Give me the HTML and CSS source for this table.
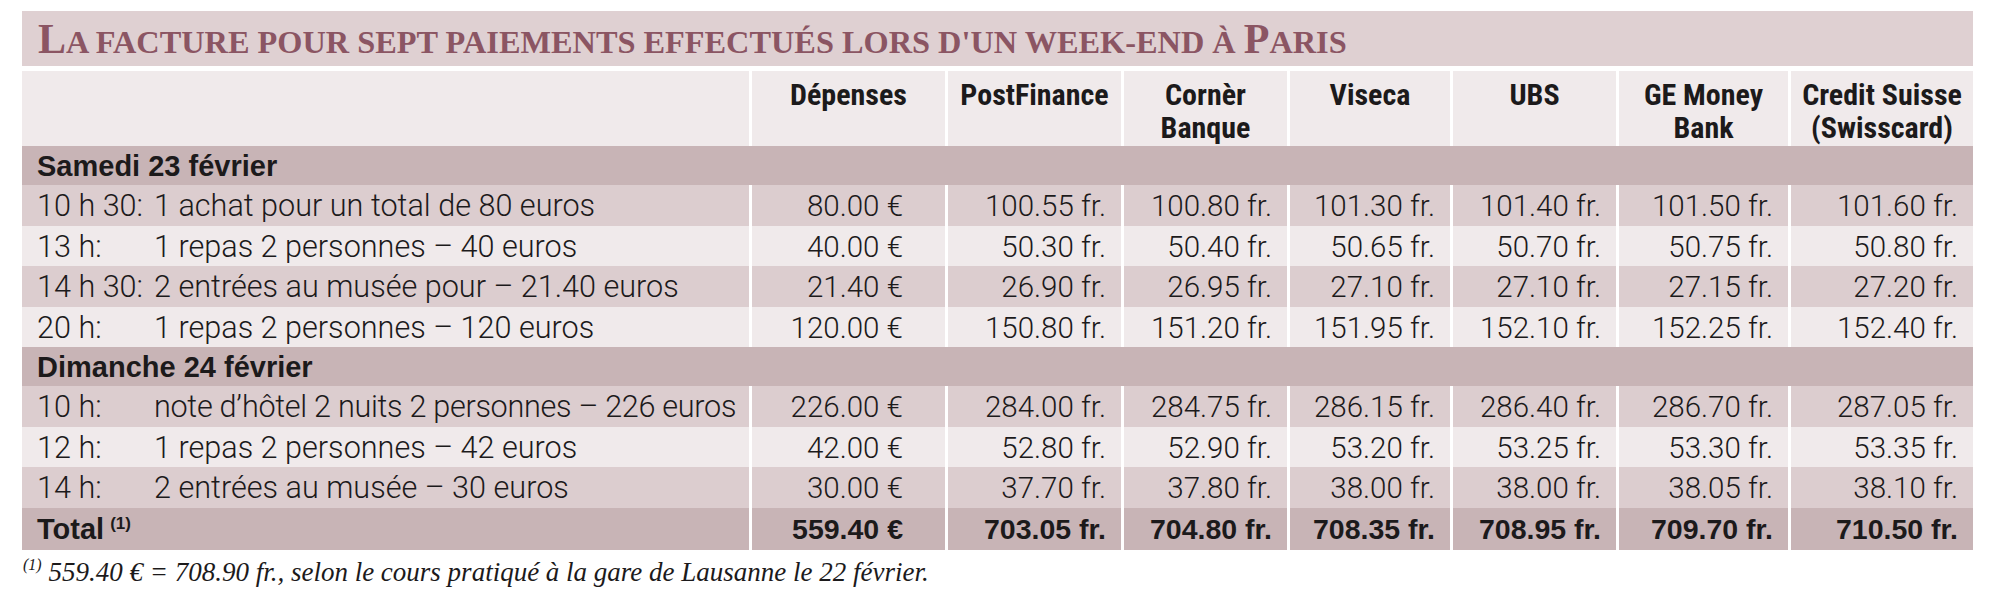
FILE: index.html
```html
<!DOCTYPE html>
<html lang="fr">
<head>
<meta charset="utf-8">
<title>La facture pour sept paiements</title>
<link rel="stylesheet" href="styles.css">
</head>
<body>
<div class="sheet">
  <h1 class="title">L<span class="sc">a facture pour sept paiements effectués lors d'un week-end à </span>P<span class="sc">aris</span></h1>
  <div class="table">
    <div class="row head">
      <div class="cell"></div>
      <div class="cell">Dépenses</div>
      <div class="cell">PostFinance</div>
      <div class="cell">Cornèr<br>Banque</div>
      <div class="cell">Viseca</div>
      <div class="cell">UBS</div>
      <div class="cell">GE Money<br>Bank</div>
      <div class="cell">Credit Suisse<br>(Swisscard)</div>
    </div>
    <div class="band">Samedi 23 février</div>
    <div class="row data dark">
      <div class="cell label"><span class="time">10 h 30:</span><span class="desc">1 achat pour un total de 80 euros</span></div>
      <div class="cell num eur">80.00 €</div>
      <div class="cell num">100.55 fr.</div>
      <div class="cell num">100.80 fr.</div>
      <div class="cell num">101.30 fr.</div>
      <div class="cell num">101.40 fr.</div>
      <div class="cell num">101.50 fr.</div>
      <div class="cell num">101.60 fr.</div>
    </div>
    <div class="row data light">
      <div class="cell label"><span class="time">13 h:</span><span class="desc">1 repas 2 personnes – 40 euros</span></div>
      <div class="cell num eur">40.00 €</div>
      <div class="cell num">50.30 fr.</div>
      <div class="cell num">50.40 fr.</div>
      <div class="cell num">50.65 fr.</div>
      <div class="cell num">50.70 fr.</div>
      <div class="cell num">50.75 fr.</div>
      <div class="cell num">50.80 fr.</div>
    </div>
    <div class="row data dark">
      <div class="cell label"><span class="time">14 h 30:</span><span class="desc">2 entrées au musée pour – 21.40 euros</span></div>
      <div class="cell num eur">21.40 €</div>
      <div class="cell num">26.90 fr.</div>
      <div class="cell num">26.95 fr.</div>
      <div class="cell num">27.10 fr.</div>
      <div class="cell num">27.10 fr.</div>
      <div class="cell num">27.15 fr.</div>
      <div class="cell num">27.20 fr.</div>
    </div>
    <div class="row data light">
      <div class="cell label"><span class="time">20 h:</span><span class="desc">1 repas 2 personnes – 120 euros</span></div>
      <div class="cell num eur">120.00 €</div>
      <div class="cell num">150.80 fr.</div>
      <div class="cell num">151.20 fr.</div>
      <div class="cell num">151.95 fr.</div>
      <div class="cell num">152.10 fr.</div>
      <div class="cell num">152.25 fr.</div>
      <div class="cell num">152.40 fr.</div>
    </div>
    <div class="band">Dimanche 24 février</div>
    <div class="row data dark">
      <div class="cell label"><span class="time">10 h:</span><span class="desc hotel">note d’hôtel 2 nuits 2 personnes – 226 euros</span></div>
      <div class="cell num eur">226.00 €</div>
      <div class="cell num">284.00 fr.</div>
      <div class="cell num">284.75 fr.</div>
      <div class="cell num">286.15 fr.</div>
      <div class="cell num">286.40 fr.</div>
      <div class="cell num">286.70 fr.</div>
      <div class="cell num">287.05 fr.</div>
    </div>
    <div class="row data light">
      <div class="cell label"><span class="time">12 h:</span><span class="desc">1 repas 2 personnes – 42 euros</span></div>
      <div class="cell num eur">42.00 €</div>
      <div class="cell num">52.80 fr.</div>
      <div class="cell num">52.90 fr.</div>
      <div class="cell num">53.20 fr.</div>
      <div class="cell num">53.25 fr.</div>
      <div class="cell num">53.30 fr.</div>
      <div class="cell num">53.35 fr.</div>
    </div>
    <div class="row data dark">
      <div class="cell label"><span class="time">14 h:</span><span class="desc">2 entrées au musée – 30 euros</span></div>
      <div class="cell num eur">30.00 €</div>
      <div class="cell num">37.70 fr.</div>
      <div class="cell num">37.80 fr.</div>
      <div class="cell num">38.00 fr.</div>
      <div class="cell num">38.00 fr.</div>
      <div class="cell num">38.05 fr.</div>
      <div class="cell num">38.10 fr.</div>
    </div>
    <div class="row data total">
      <div class="cell label">Total<sup class="ref">(1)</sup></div>
      <div class="cell num eur">559.40 €</div>
      <div class="cell num">703.05 fr.</div>
      <div class="cell num">704.80 fr.</div>
      <div class="cell num">708.35 fr.</div>
      <div class="cell num">708.95 fr.</div>
      <div class="cell num">709.70 fr.</div>
      <div class="cell num">710.50 fr.</div>
    </div>
  </div>
  <p class="note"><sup>(1)</sup> 559.40 € = 708.90 fr., selon le cours pratiqué à la gare de Lausanne le 22 février.</p>
</div>
</body>
</html>
```

FILE: styles.css
```css
html, body {
  margin: 0;
  padding: 0;
  background: #ffffff;
}

.sheet {
  margin: 11px 27px 0 22px;
  color: #1c1a1b;
}

.title {
  margin: 0;
  height: 55px;
  padding-left: 16px;
  background: #dfd0d2;
  color: #8b5563;
  font-family: "Liberation Serif", "DejaVu Serif", serif;
  font-weight: bold;
  font-size: 42px;
  line-height: 56px;
  white-space: nowrap;
}

.title .sc {
  font-size: 0.77em;
  text-transform: uppercase;
}

.table {
  margin-top: 5px;
}

.row {
  display: grid;
  grid-template-columns: 727px 193px 173px 163px 160px 163px 169px 182px;
  column-gap: 3px;
}

.cell {
  box-sizing: border-box;
  white-space: nowrap;
}

.head .cell {
  height: 75px;
  padding-top: 7px;
  background: #f0eaeb;
  text-align: center;
  font-family: "Liberation Sans Narrow", "Arial Narrow", "Roboto Condensed", "Liberation Sans", sans-serif;
  font-stretch: condensed;
  font-weight: bold;
  font-size: 30px;
  line-height: 33px;
}

.band {
  box-sizing: border-box;
  height: 39px;
  padding: 2px 0 0 15px;
  background: #c8b4b6;
  font-family: "Liberation Sans", Arial, sans-serif;
  font-weight: bold;
  font-size: 29px;
  line-height: 37px;
}

.data .cell {
  height: 40.5px;
  padding-top: 2px;
  line-height: 38.5px;
}

.dark .cell {
  background: #dccdcf;
}

.light .cell {
  background: #f0eaeb;
}

.total .cell {
  height: 42px;
  background: #c8b4b6;
  font-family: "Liberation Sans", Arial, sans-serif;
  font-weight: bold;
  font-size: 28.5px;
}

.label {
  display: flex;
  padding-left: 15px;
  font-family: Roboto, "Liberation Sans", sans-serif;
  font-weight: 300;
  font-size: 30.6px;
}

.time {
  width: 117px;
  flex: none;
}

.hotel {
  letter-spacing: -0.3px;
}

.num {
  padding-right: 15px;
  text-align: right;
  font-family: Roboto, "Liberation Sans", sans-serif;
  font-weight: 300;
  font-size: 29.5px;
}

.eur {
  padding-right: 42px;
}

.total .label {
  display: block;
  font-family: "Liberation Sans", Arial, sans-serif;
  font-weight: bold;
  font-size: 29px;
}

.ref {
  font-size: 17px;
  line-height: 0;
  margin-left: 6px;
  vertical-align: 10px;
}

.note {
  margin: 6px 0 0 1px;
  font-family: "Liberation Serif", "DejaVu Serif", serif;
  font-style: italic;
  font-size: 27px;
  line-height: 32px;
  color: #1c1a1b;
}

.note sup {
  font-size: 16px;
  line-height: 0;
  vertical-align: 11px;
}
```
